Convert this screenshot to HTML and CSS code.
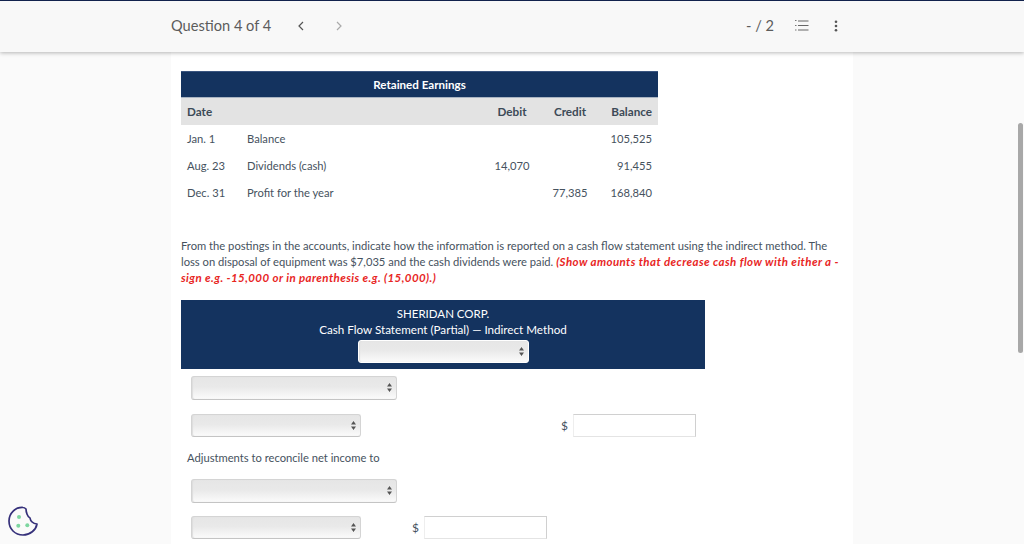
FILE: index.html
```html
<!DOCTYPE html>
<html lang="en">
<head>
<meta charset="utf-8">
<title>Question 4 of 4</title>
<link rel="stylesheet" href="styles.css">
</head>
<body>
<header class="topbar">
  <div class="topbar-inner">
    <div class="q-nav">
      <span class="q-title">Question 4 of 4</span>
      <svg class="chev" width="8" height="10" viewBox="0 0 8 10"><path d="M6 1 2 5l4 4" fill="none" stroke="#555" stroke-width="1.2"/></svg>
      <svg class="chev chev-next" width="8" height="10" viewBox="0 0 8 10"><path d="M2 1l4 4-4 4" fill="none" stroke="#aaa" stroke-width="1.2"/></svg>
    </div>
    <div class="q-tools">
      <span class="score">- / 2</span>
      <svg class="list-icon" width="14" height="11" viewBox="0 0 14 11"><path d="M0 .5h1.5M0 5.500h1.500M0 10h1.500" stroke="#777" stroke-width="1" fill="none"/><path d="M3 1h10.500M3 5.500h10.500M3 10h10.500" stroke="#666" fill="none"/></svg>
      <svg class="more-icon" width="4" height="12" viewBox="0 0 4 12"><circle cx="2" cy="1.700" r="1.300" fill="#555"/><circle cx="2" cy="6" r="1.300" fill="#555"/><circle cx="2" cy="10.300" r="1.300" fill="#555"/></svg>
    </div>
  </div>
</header>
<main class="sheet">
  <table class="ledger">
    <colgroup><col class="c-date"><col class="c-desc"><col class="c-debit"><col class="c-credit"><col class="c-bal"></colgroup>
    <thead>
      <tr class="ledger-title"><th colspan="5">Retained Earnings</th></tr>
      <tr class="ledger-head"><th>Date</th><th></th><th class="num-c">Debit</th><th class="num-c">Credit</th><th class="num-r">Balance</th></tr>
    </thead>
    <tbody>
      <tr><td>Jan. 1</td><td>Balance</td><td></td><td></td><td class="num-r">105,525</td></tr>
      <tr><td>Aug. 23</td><td>Dividends (cash)</td><td class="num-c">14,070</td><td></td><td class="num-r">91,455</td></tr>
      <tr><td>Dec. 31</td><td>Profit for the year</td><td></td><td class="num-c">77,385</td><td class="num-r">168,840</td></tr>
    </tbody>
  </table>
  <p class="prompt">From the postings in the accounts, indicate how the information is reported on a cash flow statement using the indirect method. The loss on disposal of equipment was $7,035 and the cash dividends were paid. <em class="hint">(Show amounts that decrease cash flow with either a - sign e.g. -15,000 or in parenthesis e.g. (15,000).)</em></p>
  <section class="statement">
    <div class="statement-head">
      <div class="corp">SHERIDAN CORP.</div>
      <div>Cash Flow Statement (Partial) — Indirect Method</div>
      <select class="pick pick-period" aria-label="Period"></select>
    </div>
    <div class="statement-body">
      <div class="row"><select class="pick pick-wide" aria-label="Section"></select></div>
      <div class="row row-second">
        <select class="pick pick-narrow" aria-label="Item"></select>
        <span class="spacer"></span>
        <span class="dollar">$</span><input class="amount" type="text" aria-label="Amount">
      </div>
      <div class="label">Adjustments to reconcile net income to</div>
      <div class="row"><select class="pick pick-wide" aria-label="Section"></select></div>
      <div class="row row-last">
        <select class="pick pick-narrow" aria-label="Item"></select>
        <span class="gap-inner"></span>
        <span class="dollar">$</span><input class="amount" type="text" aria-label="Amount">
      </div>
    </div>
  </section>
</main>
<div class="scrollbar"></div>
<button class="cookie" aria-label="Cookie preferences">
  <svg width="30" height="32" viewBox="0 0 30 32"><path d="M15 2.500C7.500 2 1 8 1 16c0 8 6 14 14 14 7 0 13-5 14-11-3.500-.5-6.500-2.500-7-6-2.500-1-4-6-4-9-1-1-2-1.500-3-1.500z" fill="none" stroke="#35307a" stroke-width="1.700" stroke-linejoin="round"/><circle cx="11" cy="12" r="2" fill="#7dd6a0"/><circle cx="10.300" cy="20.700" r="2" fill="#7dd6a0"/><circle cx="19.300" cy="20.300" r="2" fill="#7dd6a0"/></svg>
</button>
</body>
</html>
```
FILE: styles.css
```css
* { box-sizing: border-box; }
html, body { margin: 0; height: 544px; overflow: hidden; }
body {
  background: #fafafa;
  font-family: Lato, "Liberation Sans", sans-serif;
  color: #46525e;
  display: flex;
  flex-direction: column;
  position: relative;
}
.topbar {
  height: 52px;
  flex: none;
  background: #f8f8f8;
  border-top: 1px solid #12224d;
  box-shadow: 0 1px 4px rgba(0,0,0,.28);
  position: relative;
  z-index: 2;
}
.topbar-inner {
  width: 682px;
  margin-left: 171px;
  height: 51px;
  display: flex;
  align-items: center;
  justify-content: space-between;
  padding-bottom: 2px;
}
.q-nav { display: flex; align-items: center; }
.q-title { font-size: 14.600px; color: #5c5c5c; }
.chev { margin-left: 26px; }
.chev-next { margin-left: 30px; }
.q-tools { display: flex; align-items: center; position: relative; left: -15px; }
.score { font-size: 14.600px; color: #5c5c5c; }
.list-icon { margin-left: 21px; }
.more-icon { margin-left: 25px; }
.sheet {
  width: 682px;
  margin-left: 171px;
  background: #fff;
  flex: 1;
  padding: 19px 10px 0;
  min-height: 0;
}
.ledger {
  width: 477px;
  border-collapse: collapse;
  table-layout: fixed;
  font-size: 11.200px;
}
.ledger th, .ledger td { padding: 0 6px; height: 27px; font-weight: 400; text-align: left; }
.ledger .ledger-title th {
  height: 26px;
  background: #14335f;
  color: #fff;
  text-align: center;
  font-weight: 700;
  font-size: 11.600px;
  border-top: 1px solid #3a5580;
  border-bottom: 1px solid #a9b4c2;
}
.ledger .ledger-head th { background: #e3e3e3; font-weight: 700; font-size: 11.700px; color: #3c4a57; }
.c-date { width: 60px; }
.c-desc { width: 242px; }
.c-debit { width: 58px; }
.c-credit { width: 58px; }
.c-bal { width: 59px; }
.ledger .ledger-head .num-c, .ledger .num-c { text-align: center; }
.ledger .ledger-head .num-r, .ledger .num-r { text-align: right; }
.prompt {
  margin: 32px 0 0;
  width: 664px;
  font-size: 11.200px;
  line-height: 16px;
}
.hint { color: #e8261f; font-weight: 700; font-style: italic; letter-spacing: .42px; font-size: 11.500px; }
.statement { margin-top: 14px; }
.statement-head {
  width: 524px;
  height: 69px;
  background: #14335f;
  color: #fff;
  font-size: 11.650px;
  line-height: 16px;
  text-align: center;
  padding-top: 6px;
}
.corp { font-size: 11.500px; }
.pick {
  appearance: none;
  display: block;
  height: 23px;
  border: 1px solid #d4d4d4;
  border-bottom-color: #c4c4c4;
  border-radius: 3px;
  background-color: #ececec;
  background-image: url("data:image/svg+xml,%3Csvg xmlns='http://www.w3.org/2000/svg' width='5' height='9'%3E%3Cpath d='M2.500 0 5 3.500H0zM2.500 9 0 5.500h5z' fill='%23555'/%3E%3C/svg%3E"), linear-gradient(#e6e6e6, #e9e9e9 45%, #fbfbfb);
  background-repeat: no-repeat;
  background-position: right 4px center, 0 0;
  box-shadow: inset 1px 0 1px #ddd;
}
.pick-period { width: 171px; margin: 2px 0 0 177px; background-color: #eee; border-color: #fff; }
.pick-wide { width: 206px; height: 24px; }
.pick-narrow { width: 170px; }
.statement-body { width: 524px; padding: 7px 9px 0 10px; }
.row { display: flex; align-items: center; }
.row-second { margin-top: 14px; }
.row-last { margin-top: 13px; }
.spacer { flex: 1; }
.gap-inner { width: 51px; }
.dollar { font-size: 12px; margin-right: 5px; }
.amount {
  width: 123px;
  height: 23px;
  border: 1px solid #d0d0d0;
  border-left-color: #eee;
  border-bottom-color: #e4e4e4;
  background: #fff;
}
.label { font-size: 11.200px; line-height: 16px; margin: 13px 0 13px -4px; }
.scrollbar {
  position: absolute;
  left: 1018px;
  top: 123px;
  width: 5px;
  height: 230px;
  background: #a8a8a8;
  border-radius: 3px;
}
.cookie {
  position: absolute;
  left: 8px;
  top: 505px;
  width: 30px;
  height: 32px;
  padding: 0;
  border: 0;
  background: none;
}
```
